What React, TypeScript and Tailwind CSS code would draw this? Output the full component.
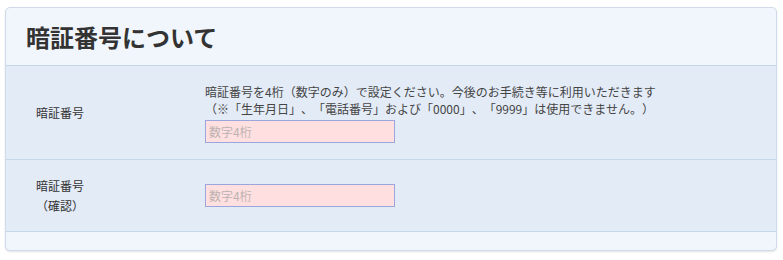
import React from 'react';

const font = { fontFamily: '"Noto Sans CJK JP", "Noto Sans", sans-serif' };

const PinInput: React.FC = () => (
  <input
    type="text"
    placeholder="数字4桁"
    className="block h-[23px] w-[190px] border border-[#9ba7dc] bg-[#ffdfdf] px-[3px] text-[12px] text-[#333] placeholder:text-[#bdb3b3] outline-none"
  />
);

const App: React.FC = () => {
  return (
    <div className="h-[260px] w-[783px] bg-white pt-[7px] pl-[5px] [text-spacing-trim:space-all]" style={font}>
      <div className="w-[772px] overflow-hidden rounded-[5px] border border-[#cfdbea] bg-[#f1f6fd] shadow-[0_1px_2px_rgba(0,0,0,0.12)]">
        <div className="flex h-[57px] items-center pl-[20px]">
          <h2 className="text-[24px] font-bold leading-none text-[#333]">暗証番号について</h2>
        </div>

        <div className="flex h-[94px] items-center border-t border-[#c3d6ea] bg-[#e3ebf7]">
          <div className="w-[108px] text-center text-[12px] text-[#333]">暗証番号</div>
          <div className="ml-[91px]">
            <p className="text-[12px] leading-[17px] text-[#444]">
              暗証番号を4桁（数字のみ）で設定ください。今後のお手続き等に利用いただきます
              <br />
              （※「生年月日」、「電話番号」および「0000」、「9999」は使用できません。）
            </p>
            <div className="mt-[3px]">
              <PinInput />
            </div>
          </div>
        </div>

        <div className="flex h-[72px] items-center border-t border-[#c3d6ea] bg-[#e3ebf7]">
          <div className="w-[108px] text-center text-[12px] leading-[20px] text-[#333]">
            暗証番号
            <br />
            （確認）
          </div>
          <div className="ml-[91px]">
            <PinInput />
          </div>
        </div>

        <div className="h-[19px] border-t border-[#c3d6ea]" />
      </div>
    </div>
  );
};

export default App;
